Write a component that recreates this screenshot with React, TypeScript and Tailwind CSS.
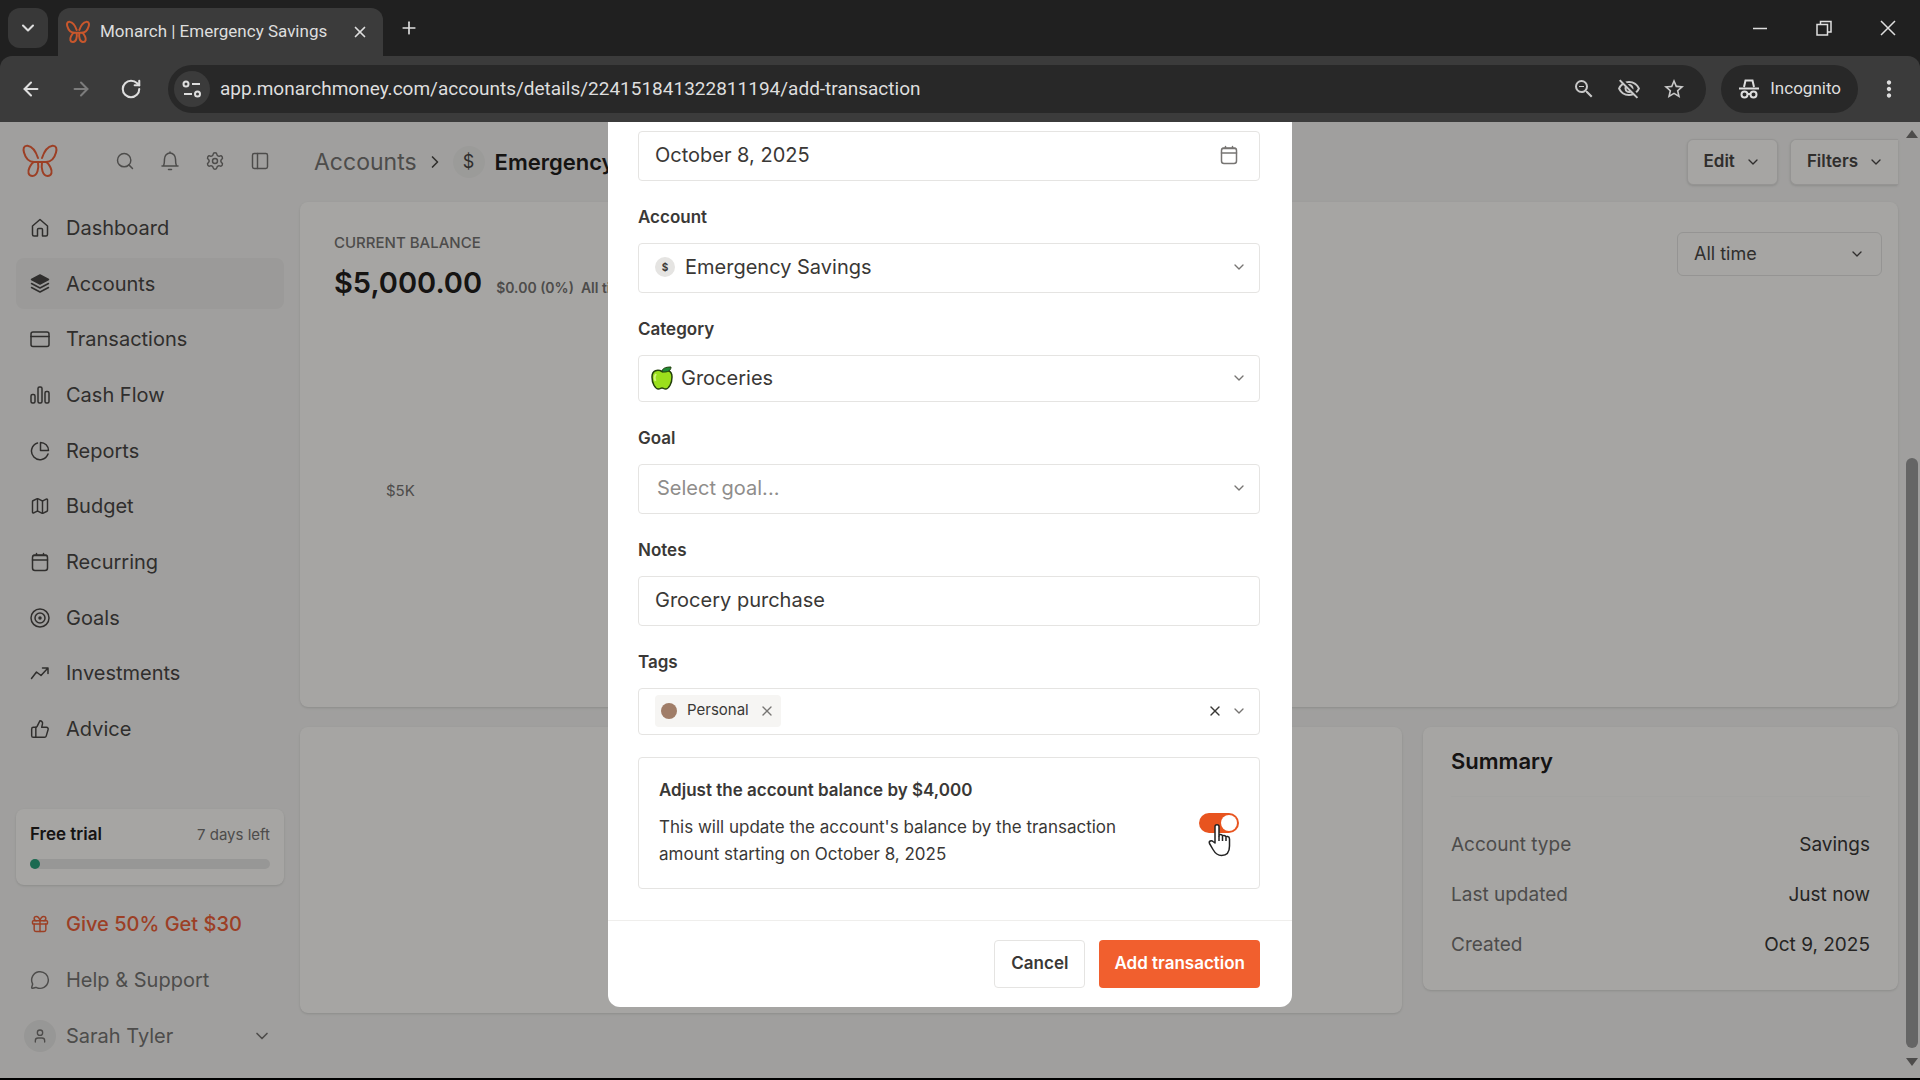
import {
  ArrowLeft,
  ArrowRight,
  ChevronDown,
  ChevronRight,
  Gift,
  Map as MapIcon,
  MessageCircle,
  PanelLeft,
  Plus,
  RotateCw,
  Search,
  Settings,
  ThumbsUp,
  User,
  X,
} from "lucide-react";
import {
  MdMoreVert,
  MdOutlineStarBorder,
  MdOutlineVisibilityOff,
  MdOutlineZoomOut,
} from "react-icons/md";
import type { ReactNode } from "react";

function Butterfly({ className }: { className?: string }) {
  return (
    <svg
      viewBox="0 0 36 34"
      fill="none"
      stroke="currentColor"
      strokeLinecap="round"
      strokeLinejoin="round"
      className={className}
      aria-hidden="true"
    >
      <path d="M16 14C14 8 10 2.500 5.500 1.800C1.500 1.500 1 5 2 8.500C3.500 14 7 18 12 18H24C29 18 32.500 14 34 8.500C35 5 34.500 1.500 30.500 1.800C26 2.500 22 8 20 14" />
      <path d="M16 18.500C17 24 15.500 32 10.500 32C6 32 5.500 27.500 7.500 23.500C9 20.500 10.500 18.500 12 18" />
      <path d="M20 18.500C19 24 20.500 32 25.500 32C30 32 30.500 27.500 28.500 23.500C27 20.500 25.500 18.500 24 18" />
    </svg>
  );
}

function LineIcon({ children }: { children: ReactNode }) {
  return (
    <svg
      viewBox="0 0 20 20"
      fill="none"
      stroke="currentColor"
      strokeWidth="1.500"
      strokeLinecap="round"
      strokeLinejoin="round"
      className="size-5"
      aria-hidden="true"
    >
      {children}
    </svg>
  );
}

function CalendarIcon() {
  return (
    <LineIcon>
      <rect x="2.500" y="3" width="15" height="15.500" rx="2.500" />
      <path d="M2.500 8h15M3.500 3.500h13M6.500 1.500V3M13.500 1.500V3" />
    </LineIcon>
  );
}

const navItems: { label: string; icon: ReactNode; active?: boolean }[] = [
  {
    label: "Dashboard",
    icon: (
      <LineIcon>
        <path d="M2.500 8L10 1.500L17.500 8V16.500Q17.500 18 16 18H12.500V11.500Q12.500 10.500 11.500 10.500H8.500Q7.500 10.500 7.500 11.500V18H4Q2.500 18 2.500 16.500Z" />
      </LineIcon>
    ),
  },
  {
    label: "Accounts",
    active: true,
    icon: (
      <LineIcon>
        <path d="M10 1L18.500 5.500L10 10L1.500 5.500Z" fill="currentColor" />
        <path d="M1.500 9.500L10 14L18.500 9.500M1.500 13.500L10 18L18.500 13.500" />
      </LineIcon>
    ),
  },
  {
    label: "Transactions",
    icon: (
      <LineIcon>
        <rect x="1" y="3" width="18" height="14.500" rx="2" />
        <path d="M1 7.500h18" />
      </LineIcon>
    ),
  },
  {
    label: "Cash Flow",
    icon: (
      <LineIcon>
        <rect x="1" y="9.500" width="4" height="8.500" rx="1.500" />
        <rect x="8" y="2" width="4" height="16" rx="1.500" />
        <rect x="15" y="6.500" width="4" height="11.500" rx="1.500" />
      </LineIcon>
    ),
  },
  {
    label: "Reports",
    icon: (
      <LineIcon>
        <path d="M7.500 2A8.500 8.500 0 1 0 18 13" />
        <path d="M10.500 1.500A8 8 0 0 1 18.500 9.500H10.500Z" />
      </LineIcon>
    ),
  },
  { label: "Budget", icon: <MapIcon className="size-5" strokeWidth={1.75} /> },
  { label: "Recurring", icon: <CalendarIcon /> },
  {
    label: "Goals",
    icon: (
      <LineIcon>
        <circle cx="10" cy="10" r="9" />
        <circle cx="10" cy="10" r="5" />
        <circle cx="10" cy="10" r="1" fill="currentColor" />
      </LineIcon>
    ),
  },
  {
    label: "Investments",
    icon: (
      <LineIcon>
        <path d="M1.500 15.500L6.500 9L11 12.500L18 5M12.500 5H18V10.500" />
      </LineIcon>
    ),
  },
  { label: "Advice", icon: <ThumbsUp className="size-5" strokeWidth={1.75} /> },
];

const summary = [
  ["Account type", "Savings"],
  ["Last updated", "Just now"],
  ["Created", "Oct 9, 2025"],
];

function BrowserChrome() {
  return (
    <header className="shrink-0 bg-[#202020] font-[Roboto,sans-serif] text-[#dedede]">
      <div className="flex h-14 items-center">
        <button
          type="button"
          aria-label="Search tabs"
          className="ml-2 flex size-10 items-center justify-center rounded-xl bg-[#383838]"
        >
          <ChevronDown className="size-5" strokeWidth={2.5} />
        </button>
        <div className="ml-2.5 flex h-12 w-[325px] items-center self-end rounded-t-xl bg-[#3b3b3b] pr-3.5 pl-2">
          <Butterfly className="size-6 stroke-3 text-[#c9572c]" />
          <span className="ml-2.5 text-[17px] whitespace-nowrap">
            Monarch | Emergency Savings
          </span>
          <button type="button" aria-label="Close tab" className="ml-auto">
            <X className="size-[18px]" strokeWidth={2.25} />
          </button>
        </div>
        <button type="button" aria-label="New tab" className="ml-4">
          <Plus className="size-5" strokeWidth={2} />
        </button>
        <div className="ml-auto flex items-center gap-12 pr-6">
          <button type="button" aria-label="Minimize">
            <svg viewBox="0 0 16 16" className="size-4" stroke="currentColor">
              <path d="M1 8.500h14" strokeWidth="1.500" />
            </svg>
          </button>
          <button type="button" aria-label="Restore">
            <svg
              viewBox="0 0 16 16"
              className="size-4"
              fill="none"
              stroke="currentColor"
              strokeWidth="1.500"
            >
              <path d="M1 4.500h10.500v10.500H1zM4.500 4.500V1.500H15V12H11.500" />
            </svg>
          </button>
          <button type="button" aria-label="Close window">
            <svg viewBox="0 0 16 16" className="size-4" stroke="currentColor">
              <path d="M1 1l14 14M15 1L1 15" strokeWidth="1.500" />
            </svg>
          </button>
        </div>
      </div>

      <div className="flex h-[66px] items-center rounded-t-xl bg-[#3b3b3b] pl-5">
        <button type="button" aria-label="Back">
          <ArrowLeft className="size-[22px]" strokeWidth={2.25} />
        </button>
        <button
          type="button"
          aria-label="Forward"
          className="ml-7 text-[#7c7c7c]"
        >
          <ArrowRight className="size-[22px]" strokeWidth={2.25} />
        </button>
        <button type="button" aria-label="Reload" className="ml-7">
          <RotateCw className="size-[22px]" strokeWidth={2.25} />
        </button>
        <div className="ml-[26px] flex h-12 flex-1 items-center rounded-full bg-[#282828] pr-5 pl-1.5">
          <button
            type="button"
            aria-label="Site information"
            className="flex size-9 items-center justify-center rounded-full bg-[#3b3b3b]"
          >
            <svg
              viewBox="0 0 20 20"
              className="size-5"
              fill="none"
              stroke="currentColor"
              strokeWidth="2"
            >
              <circle cx="4" cy="5" r="2.500" />
              <path d="M10 5h8M2 15h8" />
              <circle cx="15.500" cy="15" r="2.500" />
            </svg>
          </button>
          <input
            type="text"
            aria-label="Address"
            defaultValue="app.monarchmoney.com/accounts/details/224151841322811194/add-transaction"
            className="ml-2.5 min-w-0 flex-1 bg-transparent text-[19px] outline-none"
          />
          <div className="flex items-center gap-[21px] text-[#c8c8c8]">
            <button type="button" aria-label="Zoom">
              <MdOutlineZoomOut className="size-6" />
            </button>
            <button type="button" aria-label="Third-party cookies blocked">
              <MdOutlineVisibilityOff className="size-6" />
            </button>
            <button type="button" aria-label="Bookmark">
              <MdOutlineStarBorder className="size-6" />
            </button>
          </div>
        </div>
        <button
          type="button"
          className="ml-[15px] flex h-12 items-center gap-2.5 rounded-full bg-[#282828] px-[17px] text-[17px]"
        >
          <svg
            viewBox="0 0 22 22"
            className="size-[22px]"
            fill="none"
            stroke="currentColor"
            strokeWidth="2"
          >
            <path d="M6 9L7.500 2.500H14.500L16 9M1 10.500H21" />
            <circle cx="6.500" cy="16.500" r="3" />
            <circle cx="15.500" cy="16.500" r="3" />
            <path d="M9.500 16h3" />
          </svg>
          Incognito
        </button>
        <button type="button" aria-label="Browser menu" className="mx-[18px]">
          <MdMoreVert className="size-[26px]" />
        </button>
      </div>
    </header>
  );
}

function Sidebar() {
  return (
    <aside className="flex w-[300px] shrink-0 flex-col px-4 pb-3 text-xl text-[#4a4846]">
      <div className="flex h-[78px] shrink-0 items-center pr-3.5 pl-1.5">
        <Butterfly className="size-9 stroke-2 text-[#f0623a]" />
        <div className="ml-auto flex gap-[25px] text-[#777573]">
          <button type="button" aria-label="Search">
            <Search className="size-5" strokeWidth={1.75} />
          </button>
          <button type="button" aria-label="Notifications">
            <LineIcon>
              <path d="M2 15h16M3.500 15C4.500 13 4.500 11 4.500 8A5.500 6 0 0 1 15.500 8C15.500 11 15.500 13 16.500 15M8.500 18.500h3M10 1v1" />
            </LineIcon>
          </button>
          <button type="button" aria-label="Settings">
            <Settings className="size-5" strokeWidth={1.75} />
          </button>
          <button type="button" aria-label="Toggle sidebar">
            <PanelLeft className="size-5" strokeWidth={1.75} />
          </button>
        </div>
      </div>

      <nav className="flex h-[557px] shrink-0 flex-col">
        {navItems.map((item) => (
          <a
            key={item.label}
            href="#"
            className={
              item.active
                ? "my-0.5 flex flex-1 items-center gap-4 rounded-lg bg-[#eeedeb] px-3.5"
                : "my-0.5 flex flex-1 items-center gap-4 px-3.5"
            }
          >
            {item.icon}
            {item.label}
          </a>
        ))}
      </nav>

      <div className="mt-[52px] rounded-lg bg-[#fffefb] px-3.5 pt-3.5 pb-4 shadow-sm">
        <div className="flex items-center justify-between text-[15px]">
          <span className="text-[17px] font-semibold text-[#22201d]">
            Free trial
          </span>
          <span className="text-[#777573]">7 days left</span>
        </div>
        <div className="mt-3 h-2.5 rounded-full bg-[#e9e8e6]">
          <div className="size-2.5 rounded-full bg-[#2aa37d]" />
        </div>
      </div>

      <a
        href="#"
        className="mt-[11px] flex h-14 items-center gap-4 px-3.5 font-medium text-[#f0623a]"
      >
        <Gift className="size-5" strokeWidth={1.75} />
        Give 50% Get $30
      </a>
      <a
        href="#"
        className="flex h-14 items-center gap-4 px-3.5 text-[#777573]"
      >
        <MessageCircle className="size-5" strokeWidth={1.75} />
        Help &amp; Support
      </a>
      <button
        type="button"
        className="flex h-14 items-center px-2 text-[#777573]"
      >
        <span className="mr-2.5 flex size-8 items-center justify-center rounded-full bg-[#e9e8e6]">
          <User className="size-4" />
        </span>
        Sarah Tyler
        <ChevronDown className="mr-1 ml-auto size-5" strokeWidth={2} />
      </button>
    </aside>
  );
}

function AccountPage() {
  return (
    <main className="flex min-w-0 flex-1 flex-col text-[#4a4846]">
      <div className="flex h-20 shrink-0 items-center pl-3.5">
        <a href="#" className="text-[23px] text-[#777573]">
          Accounts
        </a>
        <ChevronRight className="mx-2 size-5" />
        <span className="mr-2.5 flex size-8 items-center justify-center rounded-full bg-[#efeeec] text-lg">
          $
        </span>
        <h1 className="text-[22px] font-semibold whitespace-nowrap text-[#22201d]">
          Emergency Savings
        </h1>
        <div className="ml-auto flex gap-3 text-[17px] font-semibold">
          <button
            type="button"
            className="flex h-[46px] items-center gap-2.5 rounded-md border border-[#e5e4e2] bg-[#fffefb] px-4 shadow-sm"
          >
            Edit
            <ChevronDown className="size-4" />
          </button>
          <button
            type="button"
            className="flex h-[46px] items-center gap-2.5 rounded-l-md border border-r-0 border-[#e5e4e2] bg-[#fffefb] pr-3.5 pl-4 shadow-sm"
          >
            Filters
            <ChevronDown className="size-4" />
          </button>
        </div>
      </div>

      <section className="flex h-[505px] shrink-0 flex-col rounded-lg bg-[#fffefb] px-[34px] pt-[30px] shadow-sm">
        <div className="flex items-start justify-between">
          <div>
            <h2 className="text-[15px] font-medium text-[#777573] uppercase">
              Current balance
            </h2>
            <p className="mt-2.5 flex items-baseline gap-3.5 text-sm font-semibold text-[#777573]">
              <strong className="text-[29px] leading-9 font-semibold text-[#22201d]">
                $5,000.00
              </strong>
              <span>
                $0.00 (0%)&ensp;<span>All time</span>
              </span>
            </p>
          </div>
          <button
            type="button"
            aria-label="Date range"
            className="mr-[-18px] flex h-11 w-[205px] items-center justify-between rounded-md border border-[#e5e4e2] px-4 text-lg"
          >
            All time
            <ChevronDown className="size-4" />
          </button>
        </div>
        <span className="mt-[179px] ml-[52px] text-[15px] text-[#777573]">
          $5K
        </span>
      </section>

      <div className="mt-5 flex items-start gap-[21px]">
        <section className="h-[286px] flex-1 rounded-lg bg-[#fffefb] shadow-sm" />
        <section className="w-[475px] rounded-lg bg-[#fffefb] px-7 pb-5 shadow-sm">
          <h2 className="flex h-[70px] items-center border-b border-[#fbfaf7] text-[22px] font-semibold text-[#22201d]">
            Summary
          </h2>
          <dl className="mt-[23px] text-[19px]">
            {summary.map(([label, value]) => (
              <div
                key={label}
                className="flex h-[50px] items-center justify-between"
              >
                <dt className="text-[#777573]">{label}</dt>
                <dd className="text-[#3a3836]">{value}</dd>
              </div>
            ))}
          </dl>
        </section>
      </div>
    </main>
  );
}

function Field({
  label,
  htmlFor,
  children,
}: {
  label: string;
  htmlFor: string;
  children: ReactNode;
}) {
  return (
    <div>
      <label
        htmlFor={htmlFor}
        className="mt-6 mb-3.5 block text-[17px] leading-6 font-semibold"
      >
        {label}
      </label>
      {children}
    </div>
  );
}

function GreenApple() {
  return (
    <svg viewBox="0 0 22 24" className="h-6 w-[22px]" aria-hidden="true">
      <path
        d="M11 5.500C7 3 1 4 1 11C1 17 4 23 7.500 23C9 23 10 22 11 22C12 22 13 23 14.500 23C18 23 21 17 21 11C21 4 15 3 11 5.500Z"
        fill="#9be01c"
        stroke="#23400c"
        strokeWidth="1.500"
      />
      <path
        d="M11 6C11 2.500 14 1 20 1C20 4.500 17 6.500 11 6Z"
        fill="#1f8a35"
        stroke="#23400c"
      />
      <path
        d="M5 8C3.500 10 3.500 13 4.500 15"
        stroke="#d3f57a"
        strokeWidth="2"
        fill="none"
      />
    </svg>
  );
}

function HandCursor() {
  return (
    <svg viewBox="0 0 26 34" className="h-[34px] w-[26px]" aria-hidden="true">
      <path
        d="M8 20V3.500C8 1 12 1 12 3.500V13C12 11 15.500 11 15.500 13.500C15.500 12 19 12 19 14.500C19 13 22.500 13 22.500 16V23C22.500 29 19.500 32.500 14.500 32.500C10 32.500 8 30 6 26.500L2.500 20.500C1.500 18 4.500 17 6 18.500Z"
        fill="#fff"
        stroke="#222"
        strokeWidth="1.500"
        strokeLinejoin="round"
      />
      <path
        d="M12 13V18M15.500 14V18M19 15V18"
        stroke="#222"
        strokeWidth="1.500"
      />
    </svg>
  );
}

function AddTransactionDialog() {
  return (
    <div
      role="dialog"
      aria-label="Add transaction"
      className="w-[684px] rounded-b-xl bg-white text-[#3a3836]"
    >
      <form className="pt-[9px] pr-8 pb-[31px] pl-[30px]">
        <div className="flex h-[50px] items-center rounded border border-[#e5e4e2] px-4 pb-0.5">
          <input
            type="text"
            aria-label="Date"
            defaultValue="October 8, 2025"
            className="min-w-0 flex-1 text-xl outline-none"
          />
          <span className="mr-1 text-[#777573]">
            <CalendarIcon />
          </span>
        </div>

        <Field label="Account" htmlFor="account">
          <button
            id="account"
            type="button"
            className="flex h-[50px] w-full items-center rounded border border-[#e5e4e2] px-4 pb-0.5 text-xl"
          >
            <span className="mr-2.5 flex size-5 items-center justify-center rounded-full bg-[#e5e4e2] text-[10px] font-bold">
              $
            </span>
            Emergency Savings
            <ChevronDown className="-mr-1 ml-auto size-4 text-[#777573]" />
          </button>
        </Field>

        <Field label="Category" htmlFor="category">
          <button
            id="category"
            type="button"
            className="flex h-[47px] w-full items-center gap-2 rounded border border-[#e5e4e2] px-3 pb-0.5 text-xl"
          >
            <GreenApple />
            Groceries
            <ChevronDown className="ml-auto size-4 text-[#777573]" />
          </button>
        </Field>

        <Field label="Goal" htmlFor="goal">
          <button
            id="goal"
            type="button"
            className="flex h-[50px] w-full items-center justify-between rounded border border-[#e5e4e2] pr-3 pb-0.5 pl-[18px] text-xl text-[#8f8d8b]"
          >
            Select goal...
            <ChevronDown className="size-4 text-[#777573]" />
          </button>
        </Field>

        <Field label="Notes" htmlFor="notes">
          <input
            id="notes"
            type="text"
            defaultValue="Grocery purchase"
            className="block h-[50px] w-full rounded border border-[#e5e4e2] px-4 pb-0.5 text-xl outline-none"
          />
        </Field>

        <Field label="Tags" htmlFor="tags">
          <div className="flex h-[47px] items-center rounded border border-[#e5e4e2] pr-3 pb-0.5 pl-4">
            <span className="flex h-8 items-center gap-2.5 rounded bg-[#f6f5f3] px-1.5 text-[15px]">
              <span className="size-4 rounded-full bg-[#a07d68]" />
              Personal
              <button type="button" aria-label="Remove Personal">
                <X className="size-4 text-[#777573]" />
              </button>
            </span>
            <input
              id="tags"
              type="text"
              className="min-w-0 flex-1 outline-none"
            />
            <button type="button" aria-label="Clear tags">
              <X className="size-4" />
            </button>
            <ChevronDown className="ml-2 size-4 text-[#777573]" />
          </div>
        </Field>

        <div className="mt-[22px] flex items-center justify-between rounded border border-[#e5e4e2] px-5 py-5">
          <label htmlFor="adjust" className="max-w-[480px]">
            <span className="block text-[17px] leading-6 font-semibold">
              Adjust the account balance by $4,000
            </span>
            <span className="mt-3 block text-[17px] leading-[27px]">
              This will update the account's balance by the transaction amount
              starting on October 8, 2025
            </span>
          </label>
          <div className="relative flex">
            <input
              id="adjust"
              type="checkbox"
              role="switch"
              defaultChecked
              className="h-5 w-10 appearance-none rounded-full bg-[#e8541f] before:mt-0.5 before:ml-[22px] before:block before:size-4 before:rounded-full before:bg-white"
            />
            <span className="pointer-events-none absolute top-2.5 left-2">
              <HandCursor />
            </span>
          </div>
        </div>
      </form>

      <div className="flex justify-end gap-3.5 border-t border-[#efeeec] py-[19px] pr-8 text-[17px]">
        <button
          type="button"
          className="h-12 rounded border border-[#e5e4e2] px-4 font-semibold"
        >
          Cancel
        </button>
        <button
          type="button"
          className="h-12 rounded bg-[#f15f2e] px-[15px] font-semibold text-white"
        >
          Add transaction
        </button>
      </div>
    </div>
  );
}

export default function App() {
  return (
    <div className="flex h-screen flex-col overflow-hidden border-b-2 border-black">
      <BrowserChrome />
      <div className="relative flex min-h-0 flex-1 overflow-hidden bg-[#f6f5f3] font-[Inter,sans-serif]">
        <Sidebar />
        <AccountPage />
        <div className="flex w-[22px] shrink-0 flex-col items-center pl-1.5">
          <span className="mt-2 border-x-[6px] border-b-8 border-x-transparent border-b-[#777573]" />
          <span className="mt-auto h-[590px] w-3 rounded-full bg-[#9b9b9b]" />
          <span className="mt-2.5 mb-3 border-x-[6px] border-t-8 border-x-transparent border-t-[#777573]" />
        </div>
        <div className="absolute inset-0 flex items-start justify-center bg-black/35 pr-5">
          <AddTransactionDialog />
        </div>
      </div>
    </div>
  );
}
